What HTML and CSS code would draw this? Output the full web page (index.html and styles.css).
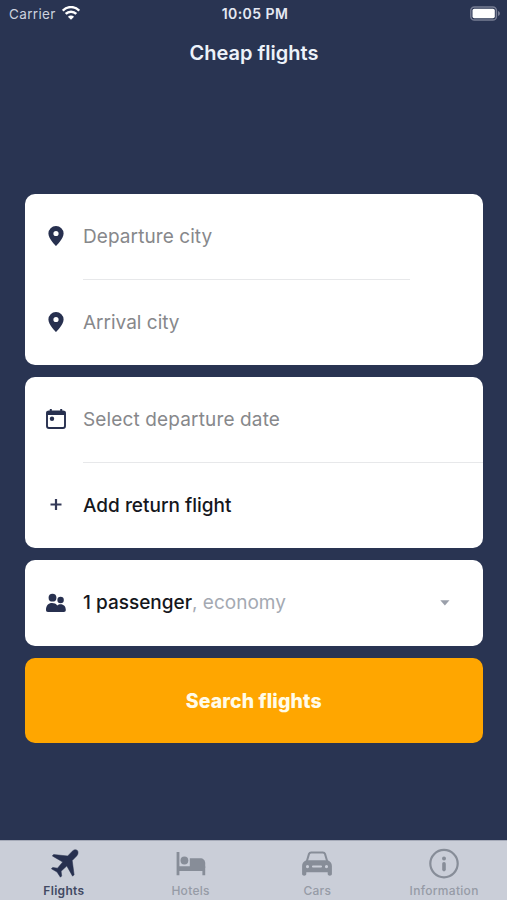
FILE: index.html
```html
<!DOCTYPE html>
<html lang="en">
<head>
<meta charset="utf-8">
<title>Cheap flights</title>
<link rel="stylesheet" href="styles.css">
</head>
<body>
<div class="screen">
  <div class="status">
    <div class="carrier"><span>Carrier</span>
      <svg class="wifi" width="18" height="14" viewBox="0 0 18 14" fill="none" stroke="#fff" stroke-width="2.5"><path d="M.8 4.700C5.400-.1 12.600-.1 17.200 4.700"/><path d="M3.700 7.900c2.900-3 7.700-3 10.600 0"/><path d="M9 13.800 5.900 10.700c1.700-1.700 4.500-1.700 6.200 0z" fill="#fff" stroke="none"/></svg>
    </div>
    <div class="time">10:05 PM</div>
    <svg class="battery" width="31" height="15" viewBox="0 0 31 15"><rect x=".8" y="1" width="25.600" height="13" rx="3.600" fill="none" stroke="#777d94" stroke-width="1.500"/><rect x="2.500" y="2.800" width="22.300" height="9.400" rx="1.800" fill="#fff"/><path d="M28 5v5c2.600-1 2.600-4 0-5z" fill="#777d94"/></svg>
  </div>
  <h1 class="title">Cheap flights</h1>

  <main class="form">
    <section class="card">
      <div class="row">
        <svg class="icon" viewBox="0 0 22 22"><path fill="#27304f" fill-rule="evenodd" d="M11 1a7.500 7.500 0 0 0-7.600 7.500C3.400 14 11 21 11 21s7.600-7 7.600-12.500A7.500 7.500 0 0 0 11 1zm0 4.900a2.600 2.600 0 1 1 0 5.200 2.600 2.600 0 0 1 0-5.200z"/></svg>
        <span class="hint departure">Departure city</span>
      </div>
      <div class="line short"></div>
      <div class="row">
        <svg class="icon" viewBox="0 0 22 22"><path fill="#27304f" fill-rule="evenodd" d="M11 1a7.500 7.500 0 0 0-7.600 7.500C3.400 14 11 21 11 21s7.600-7 7.600-12.500A7.500 7.500 0 0 0 11 1zm0 4.900a2.600 2.600 0 1 1 0 5.200 2.600 2.600 0 0 1 0-5.200z"/></svg>
        <span class="hint arrival">Arrival city</span>
      </div>
    </section>

    <section class="card">
      <div class="row">
        <svg class="icon" viewBox="0 0 22 22"><rect x="2" y="3.500" width="18" height="16.500" rx="2" fill="none" stroke="#27304f" stroke-width="1.900"/><path fill="#27304f" d="M1.500 3.500h19v3.600h-19zM4.800 1h2v4h-2zM15.200 1h2v4h-2z"/><circle cx="7" cy="10.700" r="2.200" fill="#27304f"/></svg>
        <span class="hint select">Select departure date</span>
      </div>
      <div class="line"></div>
      <div class="row">
        <svg class="icon" viewBox="0 0 22 22"><path d="M11 5v11M5.500 10.500h11" stroke="#343a58" stroke-width="2.200"/></svg>
        <span class="value add">Add return flight</span>
      </div>
    </section>

    <section class="card single">
      <div class="row">
        <svg class="icon" viewBox="0 0 22 22" fill="#27304f"><circle cx="7.500" cy="5.700" r="3.900"/><circle cx="15.600" cy="8" r="3.200"/><path d="M1 17.800c0-4.200 2.500-6.700 6-6.700 2.300 0 4 .8 5.200 2.300 1-.8 2-1.200 3.400-1.200 3.100 0 5.200 2.200 5.200 5.600 0 1.600-.6 2.200-2 2.200H3c-1.400 0-2-.6-2-2.200z"/></svg>
        <span class="value people">1 passenger<span class="class">, economy</span></span>
        <svg class="caret" width="10" height="6" viewBox="0 0 10 6"><path d="M.3.300h9.200L4.900 5.400z" fill="#9a9faa"/></svg>
      </div>
    </section>

    <button class="search"><span>Search flights</span></button>
  </main>

  <nav class="tabs">
    <div class="tab active">
      <svg width="32" height="32" viewBox="0 0 32 32"><path fill="#27304f" stroke="#27304f" stroke-width=".5" stroke-linejoin="round" d="M29.300 2.400c-1.500-1.200-3.500-.7-5 .8l-4.600 4.800L5.600 6.500 4.300 7.900l10.400 6.100-5.200 6.200-4.800-.8-1.300 1.400 5.600 3.200 3.400 5.200 1.300-1.300-.6-4.700 5.700-5.300 5.800 10.300 1.500-1.500-1.900-14.100 4.500-4.700c1.400-1.500 1.900-4 .6-5.500z"/></svg>
      <span>Flights</span>
    </div>
    <div class="tab">
      <svg width="32" height="32" viewBox="0 0 32 32" fill="#878d98"><path d="M1.600 4h2.800v14.300h25.800v8.900h-2.800v-4.300h-23v4.300H1.600z"/><circle cx="9.400" cy="12.500" r="3.900"/><path d="M14.800 10.300h10.400c3 0 5 2 5 5v4.800H14.800z"/></svg>
      <span>Hotels</span>
    </div>
    <div class="tab">
      <svg width="32" height="32" viewBox="0 0 32 32"><path d="M5.600 14 8 5.900Q8.500 4.500 10.200 4.500h11.600q1.700 0 2.200 1.400L26.400 14" fill="none" stroke="#878d98" stroke-width="2"/><path fill="#878d98" fill-rule="evenodd" d="M5.300 12.200h21.400c2.700 1 4.200 2.900 4.200 5.900v8c0 2.200-4.200 2.200-4.200 0v-1.800H5.300v1.800c0 2.200-4.200 2.200-4.200 0v-8c0-3 1.500-4.900 4.200-5.900zm1.200 4.800a1.600 1.600 0 1 0 0 3.200 1.600 1.600 0 0 0 0-3.200zm19 0a1.600 1.600 0 1 0 0 3.200 1.600 1.600 0 0 0 0-3.200zM12 17.600c-1.400 0-1.400 2 0 2h8c1.400 0 1.400-2 0-2z"/></svg>
      <span>Cars</span>
    </div>
    <div class="tab">
      <svg width="32" height="32" viewBox="0 0 32 32"><circle cx="16" cy="15.600" r="13.700" fill="none" stroke="#878d98" stroke-width="2.200"/><circle cx="16" cy="10.400" r="2" fill="#878d98"/><path d="M16 15.800v5.800" stroke="#878d98" stroke-width="3.600" stroke-linecap="round"/></svg>
      <span>Information</span>
    </div>
  </nav>
</div>
</body>
</html>
```
FILE: styles.css
```css
* { box-sizing: border-box; }
body {
  margin: 0;
  font-family: Inter, "Liberation Sans", sans-serif;
  background: #293452;
}
.screen {
  height: 900px;
  display: flex;
  flex-direction: column;
  background: #293452;
}
.status {
  display: grid;
  grid-template-columns: 1fr auto 1fr;
  align-items: center;
  height: 27px;
  padding: 0 6px 0 9px;
  font-size: 13.5px;
  color: #e5e9f2;
}
.carrier { display: flex; align-items: center; gap: 6px; letter-spacing: .35px; color: #ccd1de; }
.wifi { margin-top: -2px; }
.time { font-size: 14px; font-weight: 600; letter-spacing: .45px; }
.battery { justify-self: end; margin-top: -1px; }
.title {
  margin: 11px 0 0;
  padding-left: 1px;
  text-align: center;
  font-size: 20px;
  line-height: 30px;
  font-weight: 600;
  color: #edf2fa;
}
.form {
  display: flex;
  flex-direction: column;
  gap: 12.3px;
  margin-top: 125.5px;
  padding: 0 24.5px 0 25px;
}
.card {
  display: flex;
  flex-direction: column;
  height: 171px;
  border-radius: 10px;
  background: #fff;
  color: #15171c;
}
.single { height: 85.5px; }
.row {
  flex: 1;
  display: flex;
  align-items: center;
  padding: 0 33px 0 20px;
  font-size: 19px;
}
.icon { width: 22px; height: 22px; margin-right: 16px; }
.hint { color: #87888b; }
.departure { letter-spacing: .08px; }
.select { letter-spacing: .14px; }
.value { font-weight: 500; }
.class { color: #a4a9b2; font-weight: 400; }
.caret { margin-left: auto; }
.line { height: 1px; margin-left: 58px; background: #e7e8ea; }
.short { margin-right: 73px; }
.search {
  height: 85.5px;
  border: 0;
  border-radius: 10px;
  background: #ffa600;
  color: #fffbe9;
  font: 800 19.5px Inter, "Liberation Sans", sans-serif;
  letter-spacing: .1px;
}
.tabs {
  display: grid;
  grid-template-columns: repeat(4, 1fr);
  height: 60px;
  margin-top: auto;
  border-top: 1px solid #a5aab8;
  background: #caced8;
}
.tab {
  display: flex;
  flex-direction: column;
  align-items: center;
  padding: 7px 0 0 1px;
  font-size: 12px;
  line-height: 15px;
  font-weight: 500;
  letter-spacing: .3px;
  color: #969ba6;
}
.tab span { margin-top: 3px; }
.active { color: #414963; font-weight: 600; }
```
